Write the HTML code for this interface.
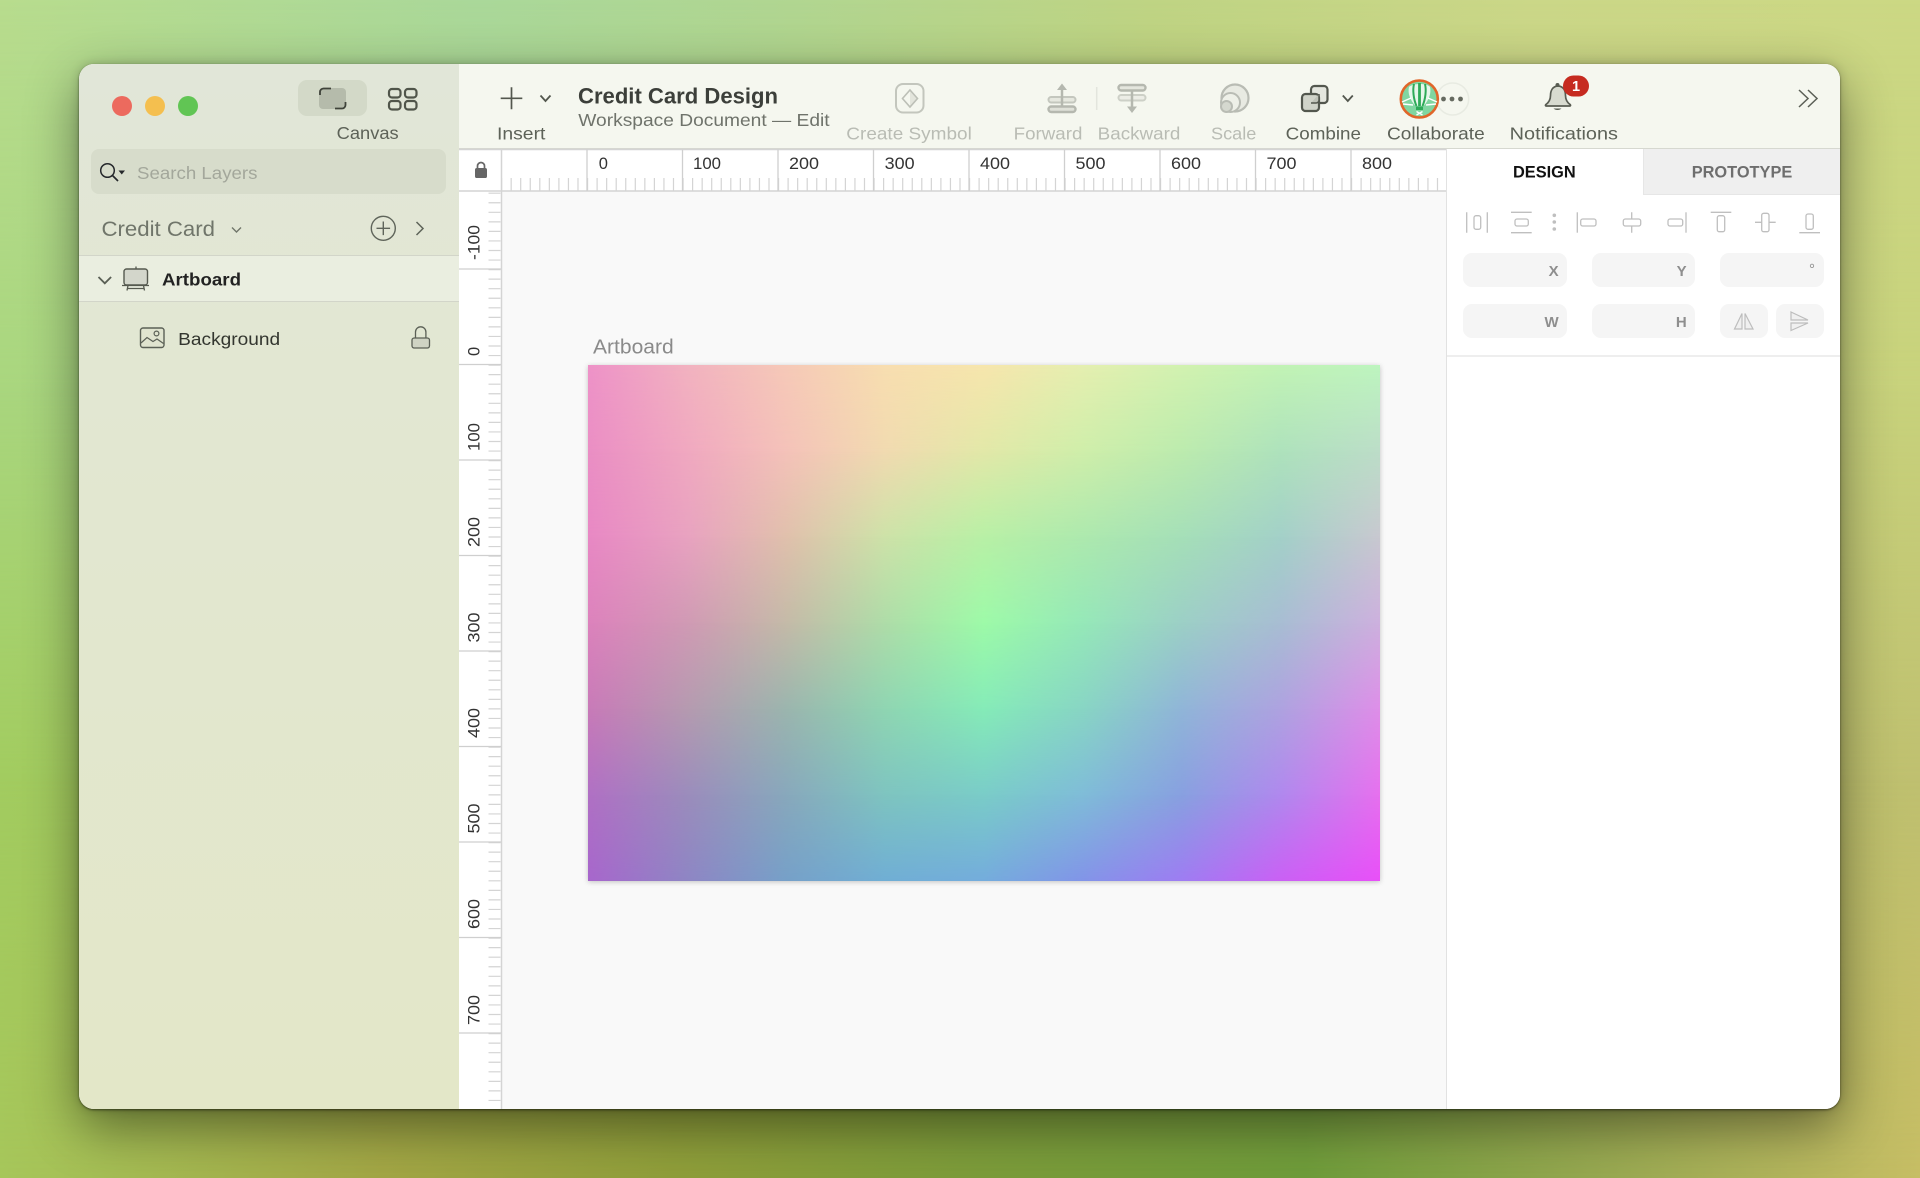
<!DOCTYPE html>
<html lang="en">
<head>
<meta charset="utf-8">
<title>Credit Card Design</title>
<style>
html,body{margin:0;padding:0;width:1920px;height:1178px;overflow:hidden;background:#a9c870}
*{box-sizing:border-box}
.abs{position:absolute}
.mesh{position:absolute;inset:0}
#bg{position:absolute;left:0;top:0;width:1920px;height:1178px}
#win{position:absolute;left:79px;top:64px;width:1761px;height:1045px;border-radius:15px;background:#fff;box-shadow:0 18px 52px rgba(0,0,0,.46),0 0 10px rgba(0,0,0,.18),0 1px 2px rgba(0,0,0,.5)}
#clip{position:absolute;inset:0;border-radius:15px;overflow:hidden}
#side{position:absolute;left:0;top:0;width:380px;height:1045px;background:linear-gradient(180deg,#e1e6d8 0%,#e2e7d2 30%,#e3e7c8 100%)}
#tool{position:absolute;left:380px;top:0;right:0;height:85px;background:#f5f7ef;border-bottom:1px solid #d6d8d0}
#canvasbg{position:absolute;left:422px;top:127px;width:946px;height:918px;background:#f9f9f9}
#right{position:absolute;left:1367px;top:85px;width:394px;height:960px;background:#fff;border-left:1px solid #e2e2e2}
#proto{position:absolute;left:196px;top:0;width:198px;height:46px;background:#efefef;border-left:1px solid #e6e6e6;border-bottom:1px solid #e6e6e6}
#seg{position:absolute;left:219px;top:16px;width:69px;height:36px;border-radius:9px;background:#d3d9c8}
#search{position:absolute;left:12px;top:85px;width:355px;height:45px;border-radius:8px;background:#d7dccb}
#row{position:absolute;left:0;top:191px;width:380px;height:47px;background:#eaeee0;border-top:1.5px solid #d2d5c9;border-bottom:1.5px solid #d2d5c9}
.f{position:absolute;background:#f5f5f5;border-radius:9px}
#art{position:absolute;left:588px;top:365px;width:792px;height:516px;overflow:hidden;box-shadow:0 1px 5px rgba(0,0,0,.22)}
svg#ui{position:absolute;left:0;top:0;width:1920px;height:1178px}
svg#ui text{font-family:"Liberation Sans",Arial,sans-serif;font-size:17.5px;white-space:pre}
</style>
</head>
<body>
<div id="bg">
<div class="mesh" style="background:linear-gradient(90deg,#b8dc8e 0%,#aad89a 25%,#b0d692 40%,#bfd484 60%,#cbd788 80%,#ccd884 100%)"></div>
<div class="mesh" style="background:linear-gradient(90deg,#a9d67e 0%,#a5d080 20%,#a8c870 40%,#b8c870 60%,#c5cf7a 80%,#c8d27c 100%);-webkit-mask-image:linear-gradient(180deg,transparent 0%,#000 33%);mask-image:linear-gradient(180deg,transparent 0%,#000 33%)"></div>
<div class="mesh" style="background:linear-gradient(90deg,#a2cc60 0%,#a5c455 20%,#a0b045 40%,#a0b050 60%,#b5bb60 80%,#bfc070 100%);-webkit-mask-image:linear-gradient(180deg,transparent 33%,#000 66%);mask-image:linear-gradient(180deg,transparent 33%,#000 66%)"></div>
<div class="mesh" style="background:linear-gradient(90deg,#a6c65a 0%,#a3a645 20%,#8f9e3a 35%,#7c9c3a 50%,#6e9c3a 68%,#96a850 83%,#c6bd64 100%);-webkit-mask-image:linear-gradient(180deg,transparent 66%,#000 100%);mask-image:linear-gradient(180deg,transparent 66%,#000 100%)"></div>
</div>

<div id="win"><div id="clip">
  <div id="side">
    <div id="seg"></div>
    <div id="search"></div>
    <div id="row"></div>
  </div>
  <div id="tool"></div>
  <div id="canvasbg"></div>
  <div id="right">
    <div id="proto"></div>
    <div class="f" style="left:16px;top:104px;width:104px;height:34px"></div>
    <div class="f" style="left:145px;top:104px;width:103px;height:34px"></div>
    <div class="f" style="left:273px;top:104px;width:104px;height:34px"></div>
    <div class="f" style="left:16px;top:155px;width:104px;height:34px"></div>
    <div class="f" style="left:145px;top:155px;width:103px;height:34px"></div>
    <div class="f" style="left:273px;top:155px;width:48px;height:34px"></div>
    <div class="f" style="left:329px;top:155px;width:48px;height:34px"></div>
    <div class="abs" style="left:0;top:206px;width:394px;height:2px;background:#eeeeee"></div>
  </div>
</div></div>

<div id="art">
<div class="mesh" style="background:linear-gradient(90deg,#ee92c8 0%,#f2b2c0 12.5%,#f6c9b8 25%,#f8deb0 37.5%,#f7e6ad 50%,#e5efb0 62.5%,#d2f2b0 75%,#c2f3b5 87.5%,#bdf5bf 100%)"></div>
<div class="mesh" style="background:linear-gradient(90deg,#ea8ec4 0%,#f0a8c0 12.5%,#f4c2b9 25%,#f1dab0 37.5%,#e2e8a8 50%,#cfeeaa 62.5%,#bcebae 75%,#aee2bc 87.5%,#bcddc8 100%);-webkit-mask-image:linear-gradient(180deg,transparent 0%,#000 16.67%);mask-image:linear-gradient(180deg,transparent 0%,#000 16.67%)"></div>
<div class="mesh" style="background:linear-gradient(90deg,#e888c4 0%,#e8a2c0 12.5%,#e0c0ac 25%,#cde2a8 37.5%,#b8f0a6 50%,#ade9ae 62.5%,#a5dfb8 75%,#a3d0c8 87.5%,#c8c8d0 100%);-webkit-mask-image:linear-gradient(180deg,transparent 16.67%,#000 33.33%);mask-image:linear-gradient(180deg,transparent 16.67%,#000 33.33%)"></div>
<div class="mesh" style="background:linear-gradient(90deg,#dc82bc 0%,#d09ab4 12.5%,#c4baa8 25%,#aedca8 37.5%,#9dfaa8 50%,#95e8b8 62.5%,#9ccfc6 75%,#a8bdd3 87.5%,#cdb0de 100%);-webkit-mask-image:linear-gradient(180deg,transparent 33.33%,#000 50%);mask-image:linear-gradient(180deg,transparent 33.33%,#000 50%)"></div>
<div class="mesh" style="background:linear-gradient(90deg,#c87ab8 0%,#b59ab0 12.5%,#9bb5ae 25%,#8fd5b2 37.5%,#85ebb8 50%,#88d5c4 62.5%,#90b5d8 75%,#aea2e0 87.5%,#de8ee8 100%);-webkit-mask-image:linear-gradient(180deg,transparent 50%,#000 66.67%);mask-image:linear-gradient(180deg,transparent 50%,#000 66.67%)"></div>
<div class="mesh" style="background:linear-gradient(90deg,#b070c4 0%,#9b8cbc 12.5%,#88a8bc 25%,#7ec4c0 37.5%,#7accc8 50%,#7fbcd8 62.5%,#88a0e0 75%,#b088ee 87.5%,#e670ee 100%);-webkit-mask-image:linear-gradient(180deg,transparent 66.67%,#000 83.33%);mask-image:linear-gradient(180deg,transparent 66.67%,#000 83.33%)"></div>
<div class="mesh" style="background:linear-gradient(90deg,#a766cc 0%,#8e85c4 12.5%,#76a0c8 25%,#70aed4 37.5%,#74acdc 50%,#8294e8 62.5%,#9e7cf2 75%,#ca60f4 87.5%,#e84ff8 100%);-webkit-mask-image:linear-gradient(180deg,transparent 83.33%,#000 100%);mask-image:linear-gradient(180deg,transparent 83.33%,#000 100%)"></div>
</div>

<svg id="ui" viewBox="0 0 1920 1178" xmlns="http://www.w3.org/2000/svg">
  <!-- traffic lights -->
  <circle cx="122" cy="106" r="10" fill="#ec6a5e"/>
  <circle cx="155" cy="106" r="10" fill="#f4bf4f"/>
  <circle cx="188" cy="106" r="10" fill="#61c554"/>

  <!-- canvas view icons -->
  <rect x="319" y="88" width="27" height="21" rx="4" fill="#b5bbab"/>
  <path d="M320 95v-3a3.5 3.5 0 0 1 3.5-3.5H331M345.5 102v3a3.5 3.5 0 0 1-3.5 3.500H335" fill="none" stroke="#3f433a" stroke-width="1.800"/>
  <g fill="none" stroke="#50554a" stroke-width="2.200">
    <rect x="389" y="89" width="11.500" height="8.500" rx="3"/><rect x="405" y="89" width="11.500" height="8.500" rx="3"/>
    <rect x="389" y="101" width="11.500" height="8.500" rx="3"/><rect x="405" y="101" width="11.500" height="8.500" rx="3"/>
  </g>
  <text x="336.700" y="139" textLength="62" lengthAdjust="spacingAndGlyphs" fill="#5d6258">Canvas</text>

  <!-- search -->
  <circle cx="107.500" cy="170.500" r="6.800" fill="none" stroke="#25282b" stroke-width="1.500"/>
  <path d="M112.500 175.500l5.500 5.500" stroke="#25282b" stroke-width="1.700" fill="none"/>
  <path d="M118.500 170.500h6.500l-3.250 4z" fill="#25282b"/>
  <text x="137" y="179" textLength="120.500" lengthAdjust="spacingAndGlyphs" fill="#a3a79b">Search Layers</text>

  <text x="101.500" y="236" textLength="113.500" lengthAdjust="spacingAndGlyphs" fill="#70756a" style="font-size:21.500px">Credit Card</text>
  <path d="M232 227.500l4.500 4.500 4.500-4.500" fill="none" stroke="#70756a" stroke-width="1.400"/>
  <circle cx="383.300" cy="228.300" r="12" fill="none" stroke="#5f645a" stroke-width="1.400"/>
  <path d="M376.500 228.300h13.600M383.300 221.500v13.600" stroke="#5f645a" stroke-width="1.400" fill="none"/>
  <path d="M416.500 222l6.500 6.500-6.500 6.500" fill="none" stroke="#5f645a" stroke-width="1.500"/>

  <!-- layer rows -->
  <path d="M98.500 277l6.300 6.300 6.300-6.300" fill="none" stroke="#5a5f55" stroke-width="1.800"/>
  <rect x="124" y="269" width="23.500" height="16" rx="2.500" fill="#d3d6cb" stroke="#55594f" stroke-width="1.400"/>
  <path d="M136 266.500v2.500M122 285.500h27M128 285.500l-1 5M143.500 285.500l1 5M127 288.500h17.500" fill="none" stroke="#55594f" stroke-width="1.300"/>
  <text x="162" y="285.700" textLength="79" lengthAdjust="spacingAndGlyphs" fill="#222" style="font-weight:700">Artboard</text>

  <rect x="140.500" y="328" width="23.500" height="19.500" rx="2.500" fill="#e0e4cf" stroke="#5b6056" stroke-width="1.400"/>
  <circle cx="156.500" cy="333.500" r="2.400" fill="none" stroke="#5b6056" stroke-width="1.200"/>
  <path d="M141 343l6-5.500 6 4 4-2.500 6.500 4.500" fill="none" stroke="#5b6056" stroke-width="1.200"/>
  <text x="178.200" y="345" textLength="102" lengthAdjust="spacingAndGlyphs" fill="#33362f">Background</text>
  <rect x="412" y="338" width="17.500" height="10" rx="2.200" fill="#cfd3c3" stroke="#5b6056" stroke-width="1.300"/>
  <path d="M415.500 338v-6a5.200 5.200 0 0 1 10.400 0v6" fill="none" stroke="#5b6056" stroke-width="1.300"/>

  <!-- toolbar -->
  <path d="M500.700 98.300h21.600M511.500 87.300v22" stroke="#53574e" stroke-width="1.700" fill="none"/>
  <path d="M540.500 95.500l5 5.500 5-5.500" fill="none" stroke="#53574e" stroke-width="1.800"/>
  <text x="497" y="139.300" textLength="48.400" lengthAdjust="spacingAndGlyphs" fill="#5d6258">Insert</text>

  <text x="578" y="103.300" textLength="200" lengthAdjust="spacingAndGlyphs" fill="#3c3f3a" style="font-size:22px;font-weight:700">Credit Card Design</text>
  <text x="578.300" y="126" textLength="251.300" lengthAdjust="spacingAndGlyphs" fill="#6f736b">Workspace Document — Edit</text>

  <rect x="896" y="84" width="27.500" height="28.500" rx="7" fill="none" stroke="#c3c6bd" stroke-width="2"/>
  <path d="M910 90l7.500 8.500-7.500 8.500z" fill="#e3e5dc"/>
  <path d="M910 90l7.500 8.500-7.500 8.500-7.500-8.500z" fill="none" stroke="#bdc0b7" stroke-width="1.600"/>
  <text x="846.300" y="139.300" textLength="125.500" lengthAdjust="spacingAndGlyphs" fill="#b9bcb4">Create Symbol</text>

  <!-- forward -->
  <rect x="1048.500" y="97" width="27" height="5.500" rx="2.700" fill="#e6e8df" stroke="#c4c7be" stroke-width="2"/>
  <rect x="1048.500" y="106.500" width="27" height="5.500" rx="2.700" fill="#dfe1d8" stroke="#b5b8af" stroke-width="2.400"/>
  <path d="M1062 89v17" stroke="#b5b8af" stroke-width="2.500" fill="none"/>
  <path d="M1062 83.500l-5 6.500h10z" fill="#b5b8af"/>
  <text x="1013.700" y="139.300" textLength="68.700" lengthAdjust="spacingAndGlyphs" fill="#b9bcb4">Forward</text>
  <path d="M1096.700 87v23" stroke="#e3e5dd" stroke-width="1.500" fill="none"/>
  <!-- backward -->
  <rect x="1118.500" y="85" width="27" height="5.500" rx="2.700" fill="#e4e6dd" stroke="#b5b8af" stroke-width="2.400"/>
  <rect x="1118.500" y="95" width="27" height="5.500" rx="2.700" fill="#ecede6" stroke="#cdd0c7" stroke-width="2"/>
  <path d="M1132 91v16" stroke="#b5b8af" stroke-width="2.500" fill="none"/>
  <path d="M1132 113l-5-6.500h10z" fill="#b5b8af"/>
  <text x="1097.700" y="139.300" textLength="82.700" lengthAdjust="spacingAndGlyphs" fill="#b9bcb4">Backward</text>
  <!-- scale -->
  <circle cx="1235" cy="98" r="13.500" fill="#e8eae2" stroke="#b9bcb4" stroke-width="2.200"/>
  <circle cx="1230.500" cy="102.500" r="9.500" fill="#eef0e8" stroke="#b9bcb4" stroke-width="2"/>
  <circle cx="1226.500" cy="106.500" r="5.500" fill="#d5d8cf" stroke="#b9bcb4" stroke-width="2"/>
  <text x="1211" y="139.300" textLength="45.400" lengthAdjust="spacingAndGlyphs" fill="#b9bcb4">Scale</text>
  <!-- combine -->
  <rect x="1311" y="86" width="16.500" height="17" rx="3.500" fill="#e4e6de" stroke="#53574e" stroke-width="2.200"/>
  <rect x="1302" y="94" width="17" height="17" rx="3.500" fill="#d0d3c9" stroke="#53574e" stroke-width="2.200"/>
  <path d="M1311 103h5a3 3 0 0 0 3-3v-6" fill="#bfc2b8" stroke="#53574e" stroke-width="1.500"/>
  <path d="M1342.800 95.500l5 5.500 5-5.500" fill="none" stroke="#53574e" stroke-width="1.800"/>
  <text x="1285.700" y="139.300" textLength="75.300" lengthAdjust="spacingAndGlyphs" fill="#5d6258">Combine</text>
  <!-- collaborate -->
  <circle cx="1452.700" cy="99" r="16" fill="#f5f7ef" stroke="#e8ebe2" stroke-width="1.500"/>
  <circle cx="1443.500" cy="99" r="2.400" fill="#666a60"/>
  <circle cx="1452" cy="99" r="2.400" fill="#666a60"/>
  <circle cx="1460.500" cy="99" r="2.400" fill="#666a60"/>
  <circle cx="1419.300" cy="99" r="18.500" fill="#80d6a0" stroke="#e0662a" stroke-width="2.600"/>
  <path d="M1409 87c-1.500 6 1 13 6.500 19h8c5.500-6 8-13 6.500-19-3-4-17-4-21 0z" fill="#e6f6ea"/>
  <path d="M1419.500 83v23" stroke="#2eaa58" stroke-width="2.800" fill="none"/>
  <path d="M1414 84c-1.500 6-.5 15 2.500 22M1425 84c1.500 6 .5 15-2.500 22" stroke="#2eaa58" stroke-width="2" fill="none"/>
  <path d="M1402 102l9-4M1437 102l-9-4M1403 104l10 1M1436 104l-10 1" stroke="#fff" stroke-width="1.400" fill="none"/>
  <rect x="1416" y="106.500" width="7" height="3.500" fill="#2eaa58"/>
  <path d="M1416.500 111.500l6 3.500M1422.500 111.500l-6 3.500" stroke="#fff" stroke-width="1.400" fill="none"/>
  <text x="1387" y="139.300" textLength="97.700" lengthAdjust="spacingAndGlyphs" fill="#5d6258">Collaborate</text>
  <!-- notifications -->
  <path d="M1557.500 86c-5 .6-7 4.700-7 9.500 0 4.500-1.700 7-4.800 9.200-.5.500-.2 1.300.5 1.300h23.600c.7 0 1-.8.500-1.300-3.100-2.200-4.800-4.700-4.800-9.200 0-4.800-2-8.900-7-9.500z" fill="#d8dbd0" stroke="#585c52" stroke-width="1.700"/>
  <path d="M1553.500 108.500c1 1 2.400 1.500 4 1.500s3-.5 4-1.500z" fill="#585c52"/>
  <circle cx="1557.500" cy="85" r="2" fill="#585c52"/>
  <rect x="1563" y="75.500" width="26" height="21" rx="10.500" fill="#c62b20"/>
  <text x="1576" y="91" text-anchor="middle" fill="#fff" style="font-size:14.500px;font-weight:700">1</text>
  <text x="1509.700" y="139.300" textLength="108.300" lengthAdjust="spacingAndGlyphs" fill="#5d6258">Notifications</text>
  <path d="M1799 90l9 8.500-9 8.500M1808 90l9 8.500-9 8.500" fill="none" stroke="#5b5f56" stroke-width="1.500"/>

  <!-- ruler -->
  <g fill="none" stroke="#d4d4d4">
    <path d="M459 149.500H1446M459 191H1446M501.500 149V1109" stroke-width="1.500"/>
    <line x1="501" y1="184.500" x2="1445" y2="184.500" stroke-width="13" stroke-dasharray="1.200 8.350"/>
    <line x1="494.500" y1="192.600" x2="494.500" y2="1109" stroke-width="12" stroke-dasharray="1.200 8.350"/>
    <path d="M587 149.500v41.500M682.500 149.500v41.500M778 149.500v41.500M873.500 149.500v41.500M969 149.500v41.500M1064.500 149.500v41.500M1160 149.500v41.500M1255.500 149.500v41.500M1351 149.500v41.500" stroke-width="1.300" stroke="#cfcfcf"/>
    <path d="M459 269h42M459 364.500h42M459 460h42M459 555.500h42M459 651h42M459 746.500h42M459 842h42M459 937.500h42M459 1033h42" stroke-width="1.300" stroke="#cfcfcf"/>
  </g>
  <g fill="#333" style="font-size:16.500px">
    <text x="598.700" y="169.200" style="font-size:16.500px">0</text>
    <text x="693" y="169.200" textLength="28" style="font-size:16.500px" lengthAdjust="spacingAndGlyphs">100</text>
    <text x="789" y="169.200" textLength="30" style="font-size:16.500px" lengthAdjust="spacingAndGlyphs">200</text>
    <text x="884.700" y="169.200" textLength="30" style="font-size:16.500px" lengthAdjust="spacingAndGlyphs">300</text>
    <text x="980" y="169.200" textLength="30" style="font-size:16.500px" lengthAdjust="spacingAndGlyphs">400</text>
    <text x="1075.500" y="169.200" textLength="30" style="font-size:16.500px" lengthAdjust="spacingAndGlyphs">500</text>
    <text x="1171" y="169.200" textLength="30" style="font-size:16.500px" lengthAdjust="spacingAndGlyphs">600</text>
    <text x="1266.500" y="169.200" textLength="30" style="font-size:16.500px" lengthAdjust="spacingAndGlyphs">700</text>
    <text x="1362" y="169.200" textLength="30" style="font-size:16.500px" lengthAdjust="spacingAndGlyphs">800</text>
    <text transform="translate(479.700 260) rotate(-90)" textLength="35" lengthAdjust="spacingAndGlyphs" style="font-size:16.500px">-100</text>
    <text transform="translate(479.700 356) rotate(-90)" style="font-size:16.500px">0</text>
    <text transform="translate(479.700 451) rotate(-90)" textLength="28" lengthAdjust="spacingAndGlyphs" style="font-size:16.500px">100</text>
    <text transform="translate(479.700 547) rotate(-90)" textLength="30" lengthAdjust="spacingAndGlyphs" style="font-size:16.500px">200</text>
    <text transform="translate(479.700 642.500) rotate(-90)" textLength="30" lengthAdjust="spacingAndGlyphs" style="font-size:16.500px">300</text>
    <text transform="translate(479.700 738) rotate(-90)" textLength="30" lengthAdjust="spacingAndGlyphs" style="font-size:16.500px">400</text>
    <text transform="translate(479.700 833.500) rotate(-90)" textLength="30" lengthAdjust="spacingAndGlyphs" style="font-size:16.500px">500</text>
    <text transform="translate(479.700 929) rotate(-90)" textLength="30" lengthAdjust="spacingAndGlyphs" style="font-size:16.500px">600</text>
    <text transform="translate(479.700 1025) rotate(-90)" textLength="30" lengthAdjust="spacingAndGlyphs" style="font-size:16.500px">700</text>
  </g>
  <!-- ruler lock -->
  <rect x="475" y="168" width="12" height="10" rx="1.800" fill="#666"/>
  <path d="M477.500 168v-2a3.500 3.500 0 0 1 7 0v2" fill="none" stroke="#666" stroke-width="1.700"/>

  <text x="593" y="353.300" textLength="80.700" lengthAdjust="spacingAndGlyphs" fill="#8a8a8a" style="font-size:20px">Artboard</text>

  <!-- inspector -->
  <text x="1513" y="177.300" textLength="62.700" lengthAdjust="spacingAndGlyphs" fill="#111" style="font-size:16.500px;font-weight:700">DESIGN</text>
  <text x="1691.700" y="177.300" textLength="100.600" lengthAdjust="spacingAndGlyphs" fill="#6e6e6e" style="font-size:16.500px;font-weight:700">PROTOTYPE</text>

  <g fill="none" stroke="#bfbfbf" stroke-width="1.300">
    <path d="M1466.700 212.300v20.400M1487.300 212.300v20.400"/>
    <rect x="1474" y="215.700" width="6.700" height="13.600" rx="2"/>
    <path d="M1511 212.300h20.700M1511 232.700h20.700"/>
    <rect x="1515" y="219" width="13.300" height="7" rx="2"/>
    <path d="M1577.300 212.300v20.400"/>
    <rect x="1580.700" y="219" width="15.300" height="7" rx="2"/>
    <path d="M1631.700 212.300v6.700M1631.700 226v6.700"/>
    <rect x="1623.300" y="219" width="17.400" height="7" rx="2"/>
    <path d="M1686 212.300v20.400"/>
    <rect x="1668" y="219" width="14.700" height="7" rx="2"/>
    <path d="M1710.700 212.300h20.600"/>
    <rect x="1717.300" y="215.700" width="7.400" height="16" rx="2"/>
    <path d="M1755 222.300h6.700M1769 222.300h6.700"/>
    <rect x="1761.700" y="213.300" width="7.300" height="18.400" rx="2"/>
    <path d="M1799.300 232.700h20.700"/>
    <rect x="1806" y="214" width="7.300" height="15.300" rx="2"/>
  </g>
  <circle cx="1554.300" cy="215.300" r="1.800" fill="#bfbfbf"/>
  <circle cx="1554.300" cy="222" r="1.800" fill="#bfbfbf"/>
  <circle cx="1554.300" cy="229" r="1.800" fill="#bfbfbf"/>

  <g fill="#8e8e8e">
    <text x="1558.700" y="276" text-anchor="end" style="font-size:15px;font-weight:700">X</text>
    <text x="1686.700" y="276" text-anchor="end" style="font-size:15px;font-weight:700">Y</text>
    <text x="1558.700" y="327" text-anchor="end" style="font-size:15px;font-weight:700">W</text>
    <text x="1686.700" y="327" text-anchor="end" style="font-size:15px;font-weight:700">H</text>
    <text x="1815" y="274" text-anchor="end" style="font-size:15px;font-weight:400">°</text>
  </g>
  <path d="M1734.500 329l7.500-15.500V329zM1745 313.500l8 15.500h-8z" fill="#f0f0f0" stroke="#bdbdbd" stroke-width="1.200"/>
  <path d="M1791 312l17 8h-17zM1791 323h17l-17 7.500z" fill="#f0f0f0" stroke="#bdbdbd" stroke-width="1.200"/>
</svg>
</body>
</html>
